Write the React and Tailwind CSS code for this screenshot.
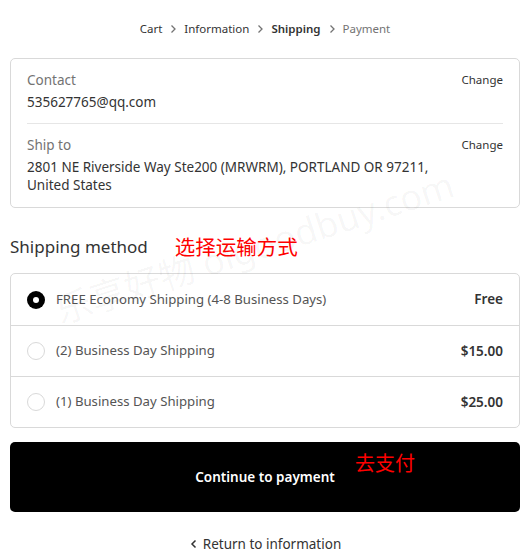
import React from "react";

function Chevron({ className = "" }) {
  return (
    <svg viewBox="0 0 10 10" className={className} fill="none" stroke="currentColor" strokeWidth="1.3">
      <path d="M3.5 1.5 L7 5 L3.5 8.5" />
    </svg>
  );
}

function Radio({ checked }) {
  if (checked) {
    return (
      <span className="flex h-[18px] w-[18px] shrink-0 items-center justify-center rounded-full bg-black">
        <span className="h-[6px] w-[6px] rounded-full bg-white" />
      </span>
    );
  }
  return <span className="h-[18px] w-[18px] shrink-0 rounded-full border border-[#d9d9d9] bg-white" />;
}

const options = [
  { label: "FREE Economy Shipping (4-8 Business Days)", price: "Free", checked: true },
  { label: "(2) Business Day Shipping", price: "$15.00" },
  { label: "(1) Business Day Shipping", price: "$25.00" },
];

export default function App() {
  return (
    <div
      className="relative h-[559px] w-[530px] overflow-hidden bg-white text-[#333333]"
      style={{ fontFamily: '"Noto Sans", "Noto Sans CJK SC", sans-serif' }}
    >
      <div className="px-[10px]">
        <nav className="flex h-[58px] items-center justify-center pb-[1px] text-[11.5px]">
          <span className="text-[#333]">Cart</span>
          <Chevron className="mx-[6px] h-[10px] w-[10px] text-[#737373]" />
          <span className="text-[#333]">Information</span>
          <Chevron className="mx-[6px] h-[10px] w-[10px] text-[#737373]" />
          <span className="font-semibold text-[#333]">Shipping</span>
          <Chevron className="mx-[6px] h-[10px] w-[10px] text-[#737373]" />
          <span className="text-[#737373]">Payment</span>
        </nav>

        <div className="rounded-[5px] border border-[#d9d9d9] px-[16px]">
          <div className="flex justify-between border-b border-[#e6e6e6] pb-[10px] pt-[10px]">
            <div className="text-[13.5px] leading-[22px]">
              <div className="text-[#737373]">Contact</div>
              <div className="text-[#333]">535627765@qq.com</div>
            </div>
            <span className="pt-[1px] text-[11.5px] leading-[20px] text-[#333]">Change</span>
          </div>
          <div className="flex justify-between pb-[13px] pt-[10px]">
            <div className="text-[13.5px]">
              <div className="leading-[22px] text-[#737373]">Ship to</div>
              <div className="mt-[2px] max-w-[420px] leading-[18px] text-[#333]">
                2801 NE Riverside Way Ste200 (MRWRM), PORTLAND OR 97211, United States
              </div>
            </div>
            <span className="pt-[1px] text-[11.5px] leading-[20px] text-[#333]">Change</span>
          </div>
        </div>

        <div className="mt-[25px] flex items-center">
          <h2 className="text-[17px] leading-[28px] text-[#333]">Shipping method</h2>
          <span className="ml-[27px] text-[20.5px] leading-[28px] text-[#ff0000]">选择运输方式</span>
        </div>

        <div className="mt-[12px] rounded-[5px] border border-[#d9d9d9]">
          {options.map((o, i) => (
            <div
              key={o.label}
              className={`flex h-[51px] items-center px-[16px] ${i > 0 ? "border-t border-[#d9d9d9]" : ""}`}
            >
              <Radio checked={o.checked} />
              <span className="ml-[11px] flex-1 text-[13.2px] text-[#545454]">{o.label}</span>
              <span className="text-[13.5px] font-semibold text-[#333]">{o.price}</span>
            </div>
          ))}
        </div>

        <button className="relative mt-[14px] flex h-[70px] w-full items-center justify-center rounded-[5px] bg-black">
          <span className="text-[13.5px] font-semibold text-white">Continue to payment</span>
          <span className="absolute left-[345px] top-[7px] text-[20px] text-[#ff0000]">去支付</span>
        </button>

        <div className="mt-[22px] flex items-center justify-center text-[13.5px] text-[#333]">
          <svg viewBox="0 0 10 10" className="mr-[4px] h-[10px] w-[10px]" fill="none" stroke="currentColor" strokeWidth="1.5">
            <path d="M6.5 1.5 L3 5 L6.5 8.5" />
          </svg>
          <span>Return to information</span>
        </div>
      </div>

      <div className="pointer-events-none absolute left-[57px] top-[285px] origin-left -rotate-[18deg] whitespace-nowrap text-[36px] text-black/[0.04]">
        乐享好物 olgoodbuy.com
      </div>
    </div>
  );
}
